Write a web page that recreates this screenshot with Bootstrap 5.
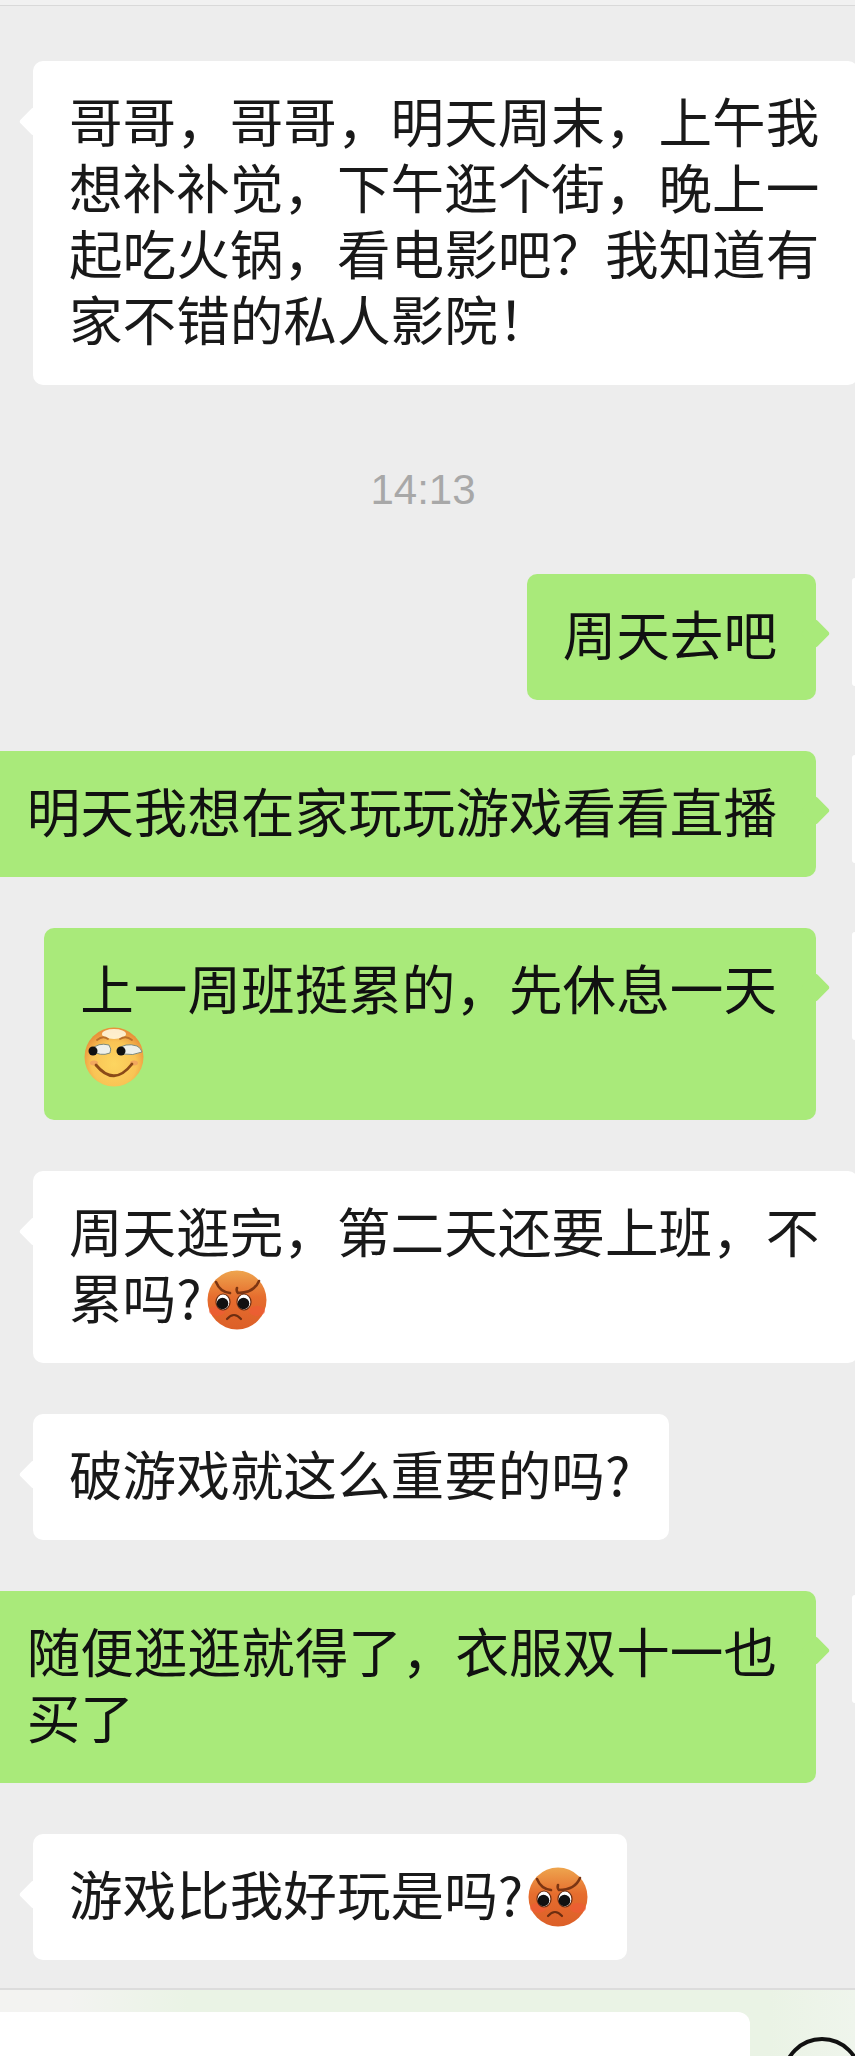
<!DOCTYPE html>
<html lang="zh-CN">
<head>
<meta charset="utf-8">
<title>聊天</title>
<link href="https://cdn.jsdelivr.net/npm/bootstrap@5.3.0/dist/css/bootstrap.min.css" rel="stylesheet">
<style>
html,body{background:#ededed;}
.chat-shell{height:2056px;overflow:hidden;font-family:"Noto Sans CJK SC","Noto Sans",sans-serif;color:#191919;}
.top-edge{height:6px;background:#f1f1f1;border-bottom:1px solid #d9d9d9;}
.thread{padding-top:55px;gap:51px;height:1982px;}
.msg{font-size:53.6px;line-height:66px;padding:26px 39px 34px 36px;border-radius:10px;white-space:nowrap;position:relative;flex-shrink:0;}
.msg::before{content:"";position:absolute;width:21px;height:21px;border-radius:3px;top:50px;transform:rotate(45deg);background:inherit;}
.msg-in{background:#fff;margin-left:33px;}
.msg-in::before{left:-10px;}
.msg-out{background:#a9ea7a;color:#111;}
.msg-out::before{right:-10px;top:49px;}
.stamp{font-family:"Liberation Sans",sans-serif;font-size:42px;line-height:48px;color:#a8a8a8;text-align:center;margin:30px 0 9px;padding-right:9px;}
.avatar-edge{flex:0 0 3px;height:108px;margin:4px 0 0 36px;background:#fff;border-radius:6px 0 0 6px;}
.emo{width:60px;height:60px;vertical-align:middle;margin-top:-12px;margin-bottom:-4px;display:inline-block;}
.emo-lead{margin-left:4px;}
.emo-after{margin-left:5px;}
.composer{height:68px;border-top:2px solid #dcdcdc;background:linear-gradient(90deg,#f3f3f1 0,#f3f3f1 8%,#eaf3e5 22%,#eaf3e5 90%,#eff5ec 100%);padding-top:22px;}
.composer-input{flex:0 0 750px;height:60px;background:#fff;border-radius:0 12px 0 0;}
.composer-ring{flex:0 0 80px;height:80px;margin:25px 0 0 32px;border:4.5px solid #111;border-radius:50%;}
</style>
</head>
<body class="m-0">
<svg width="0" height="0" class="position-absolute">
<defs>
<radialGradient id="gGrin" cx="50%" cy="62%" r="58%"><stop offset="0" stop-color="#fdd560"/><stop offset=".65" stop-color="#f9c455"/><stop offset="1" stop-color="#e8923a"/></radialGradient>
<linearGradient id="gAng" x1="0" y1="0" x2="0" y2="1"><stop offset="0" stop-color="#eea54e"/><stop offset=".45" stop-color="#e66d2e"/><stop offset="1" stop-color="#dc5f28"/></linearGradient>
<symbol id="grin" viewBox="0 0 60 60">
<circle cx="30" cy="30" r="29.5" fill="url(#gGrin)"/>
<ellipse cx="30" cy="7" rx="12" ry="5" fill="#fff6dc" opacity=".9"/>
<path d="M13 13q6-5 11-1M36 12q6-4 12 1" fill="none" stroke="#b9702a" stroke-width="1.8" stroke-linecap="round"/>
<path d="M7 23q7-8 18-5q3 4 1 8q-10 4-19-3z" fill="#eef0ea" stroke="#7f8a7a" stroke-width="1"/>
<path d="M33 23q8-8 20-4q4 2 5 6q-9 4-19 2q-5-1-6-4z" fill="#eef0ea" stroke="#7f8a7a" stroke-width="1"/>
<circle cx="9" cy="24" r="4.5" fill="#111"/><circle cx="37" cy="24" r="4.5" fill="#111"/>
<ellipse cx="10" cy="36" rx="4" ry="2.5" fill="#ee9a62" opacity=".7"/><ellipse cx="50" cy="36" rx="4" ry="2.5" fill="#ee9a62" opacity=".7"/>
<path d="M12 38q18 22 36-1" fill="none" stroke="#8a4a18" stroke-width="2.8" stroke-linecap="round"/>
</symbol>
<symbol id="angry" viewBox="0 0 60 60">
<circle cx="30" cy="30" r="29.5" fill="url(#gAng)"/>
<ellipse cx="10" cy="41" rx="8" ry="5" fill="#ef5a35" opacity=".65"/><ellipse cx="50" cy="41" rx="8" ry="5" fill="#ef5a35" opacity=".65"/>
<path d="M9 12q4 10 14 11M52 11q-5 12-21 12q-2-2-1-5" fill="none" stroke="#7c3512" stroke-width="2.6" stroke-linecap="round"/>
<ellipse cx="16" cy="32" rx="7" ry="8" fill="#fff" stroke="#6c2d10" stroke-width="1.2"/>
<ellipse cx="37" cy="32" rx="7" ry="8" fill="#fff" stroke="#6c2d10" stroke-width="1.2"/>
<circle cx="15.5" cy="33.5" r="5.8" fill="#111"/><circle cx="36.5" cy="33.5" r="5.8" fill="#111"/>
<path d="M20 49q7-8 14 0" fill="none" stroke="#6c2d10" stroke-width="2.2" stroke-linecap="round"/>
</symbol>
</defs>
</svg>
<div class="chat-shell">
  <div class="top-edge"></div>
  <div class="thread d-flex flex-column">
    <div class="d-flex">
      <div class="msg msg-in">哥哥，哥哥，明天周末，上午我<br>想补补觉，下午逛个街，晚上一<br>起吃火锅，看电影吧？我知道有<br>家不错的私人影院！</div>
    </div>
    <div class="stamp">14:13</div>
    <div class="d-flex justify-content-end">
      <div class="msg msg-out">周天去吧</div><div class="avatar-edge"></div>
    </div>
    <div class="d-flex justify-content-end">
      <div class="msg msg-out">明天我想在家玩玩游戏看看直播</div><div class="avatar-edge"></div>
    </div>
    <div class="d-flex justify-content-end">
      <div class="msg msg-out">上一周班挺累的，先休息一天<br><svg class="emo emo-lead"><use href="#grin"/></svg></div><div class="avatar-edge"></div>
    </div>
    <div class="d-flex">
      <div class="msg msg-in">周天逛完，第二天还要上班，不<br>累吗?<svg class="emo emo-after"><use href="#angry"/></svg></div>
    </div>
    <div class="d-flex">
      <div class="msg msg-in">破游戏就这么重要的吗?</div>
    </div>
    <div class="d-flex justify-content-end">
      <div class="msg msg-out">随便逛逛就得了，衣服双十一也<br>买了</div><div class="avatar-edge"></div>
    </div>
    <div class="d-flex">
      <div class="msg msg-in">游戏比我好玩是吗?<svg class="emo emo-after"><use href="#angry"/></svg></div>
    </div>
  </div>
  <div class="composer d-flex align-items-start">
    <div class="composer-input"></div>
    <div class="composer-ring"></div>
  </div>
</div>
<script src="https://cdn.jsdelivr.net/npm/bootstrap@5.3.0/dist/js/bootstrap.bundle.min.js"></script>
</body>
</html>
